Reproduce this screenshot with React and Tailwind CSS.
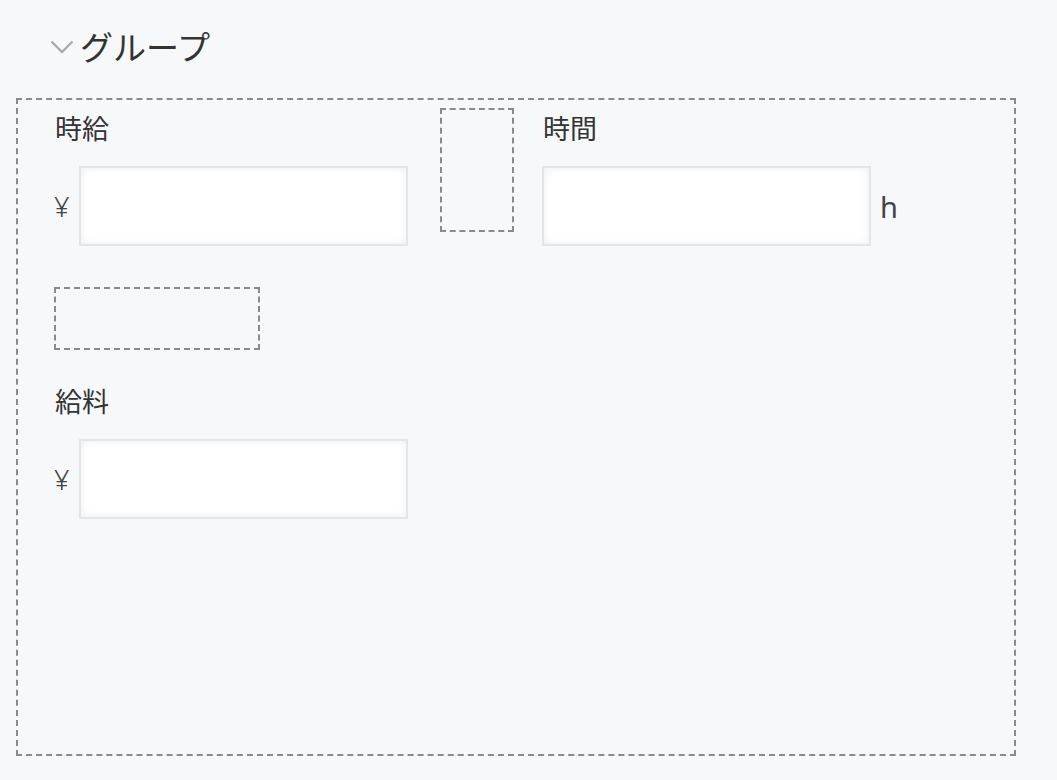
const FONT = "font-['Noto_Sans_CJK_JP','Noto_Sans',sans-serif]"

function Field({ label, prefix, suffix }) {
  return (
    <div className="flex flex-col">
      <div className="h-[40px] leading-[40px] text-[27px] text-[#333] pl-px">{label}</div>
      <div className="mt-[18px] flex items-center">
        {prefix && <span className="w-[25px] text-[27px] text-[#444] leading-none font-['Noto_Sans',sans-serif] font-light">{prefix}</span>}
        <div className="w-[329px] h-[80px] bg-white border-2 border-[#e3e5e8] shadow-[inset_0_0_8px_rgba(0,0,0,0.07)]" />
        {suffix && <span className="ml-[9px] text-[29px] text-[#444] leading-none font-['Noto_Sans',sans-serif]">{suffix}</span>}
      </div>
    </div>
  )
}

export default function App() {
  return (
    <div className={`min-h-[780px] w-[1057px] bg-[#f7f8fa] ${FONT}`}>
      {/* Header */}
      <div className="flex items-center h-[98px] pl-[50px] pb-[6px]">
        <svg width="24" height="14" viewBox="0 0 24 14" className="mt-[2px]">
          <path d="M1.5 1.5 L12 12 L22.5 1.5" fill="none" stroke="#a9abaf" strokeWidth="2.4" />
        </svg>
        <span className="ml-[6px] text-[33px] text-[#333] leading-none">グループ</span>
      </div>

      {/* Group body */}
      <div className="ml-4 w-[1000px] h-[658px] border-2 border-dashed border-[#8a8a8a] pl-[36px] pt-[8px]">
        <div className="flex items-start">
          <Field label="時給" prefix="¥" />
          <div className="ml-[32px] w-[74px] h-[124px] border-2 border-dashed border-[#8a8a8a]" />
          <div className="ml-[28px]">
            <Field label="時間" suffix="h" />
          </div>
        </div>

        <div className="mt-[41px] w-[206px] h-[63px] border-2 border-dashed border-[#8a8a8a]" />

        <div className="mt-[31px]">
          <Field label="給料" prefix="¥" />
        </div>
      </div>
    </div>
  )
}
